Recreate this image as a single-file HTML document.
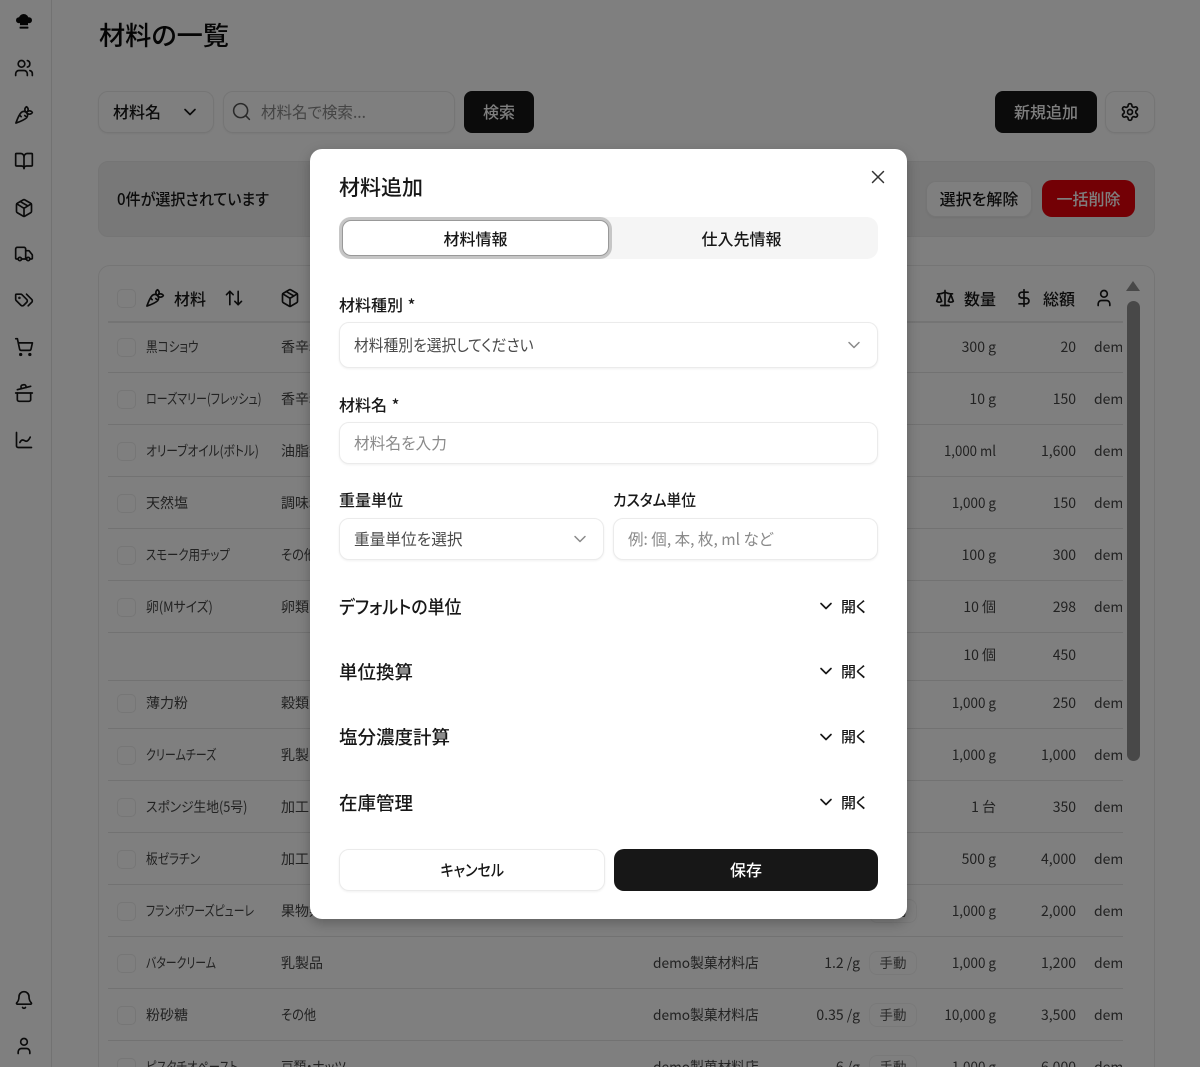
<!DOCTYPE html>
<html lang="ja"><head><meta charset="utf-8"><title>材料の一覧</title>
<style>
*{box-sizing:border-box}
html,body{margin:0;padding:0;width:1200px;height:1067px;overflow:hidden;background:#fff}
body{position:relative;font-family:"Noto Sans CJK JP",sans-serif;font-feature-settings:"palt";color:#171717}
.a{position:absolute;white-space:nowrap}
.k{transform:scaleX(var(--k,1));transform-origin:0 50%}
.i{position:absolute;fill:none;stroke:currentColor;stroke-width:2;stroke-linecap:round;stroke-linejoin:round}
.box{position:absolute;border:1px solid #ebebeb;border-radius:8px;background:#fff}
.t{position:absolute;font-size:14px;line-height:20px;white-space:nowrap;color:#444;transform:scaleX(var(--k,1));transform-origin:0 50%}
.r{text-align:right;transform-origin:100% 50%}
.cb{position:absolute;left:117px;width:19px;height:19px;border:1px solid #ececec;border-radius:5px;background:#fff}
.ln{position:absolute;left:108px;width:1015px;height:1px;background:#e5e5e5}
.bd{position:absolute;left:869px;width:48px;height:24px;border:1px solid #f2f2f2;border-radius:8px;font-size:13.5px;line-height:20px;text-align:center;color:#555}
.h{font-size:16px;font-weight:500;line-height:22px;color:#171717}
#ov{position:absolute;left:0;top:0;width:1200px;height:1067px;background:rgba(0,0,0,.5)}
#m{position:absolute;left:310px;top:149px;width:597px;height:770px;background:#fff;border-radius:12px;box-shadow:0 4px 12px rgba(0,0,0,.25)}
#m .a,#m .box,#m .i{margin-left:-310px;margin-top:-149px}
.lb{font-size:16px;font-weight:500;line-height:22px;color:#171717}
.s{font-size:18.5px;font-weight:500;line-height:26px;color:#171717}
.op{font-size:15px;font-weight:500;line-height:20px;color:#171717}
.f{box-shadow:0 1px 2px rgba(0,0,0,.06);border-radius:10px}
.ph{font-size:16px;line-height:22px;color:#8a8a8a}
.v{font-size:16px;line-height:22px;color:#4a4a4a}
</style></head><body>
<svg width="0" height="0" style="position:absolute"><defs>
<symbol id="users" viewBox="0 0 24 24"><path d="M16 21v-2a4 4 0 0 0-4-4H6a4 4 0 0 0-4 4v2"/><circle cx="9" cy="7" r="4"/><path d="M22 21v-2a4 4 0 0 0-3-3.87"/><path d="M16 3.13a4 4 0 0 1 0 7.75"/></symbol>
<symbol id="carrot" viewBox="0 0 24 24"><path d="M2.27 21.7s9.87-3.5 12.73-6.36a4.5 4.5 0 0 0-6.36-6.37C5.77 11.84 2.27 21.7 2.27 21.7zM8.64 14l-2.05-2.04M15.34 15l-2.46-2.46"/><path d="M22 9s-1.33-2-3.5-2C16.86 7 15 9 15 9s1.33 2 3.5 2S22 9 22 9z"/><path d="M15 2s-2 1.33-2 3.5S15 9 15 9s2-1.84 2-3.5C17 3.33 15 2 15 2z"/></symbol>
<symbol id="book" viewBox="0 0 24 24"><path d="M12 7v14"/><path d="M3 18a1 1 0 0 1-1-1V4a1 1 0 0 1 1-1h5a4 4 0 0 1 4 4 4 4 0 0 1 4-4h5a1 1 0 0 1 1 1v13a1 1 0 0 1-1 1h-6a3 3 0 0 0-3 3 3 3 0 0 0-3-3z"/></symbol>
<symbol id="pkg" viewBox="0 0 24 24"><path d="M11 21.73a2 2 0 0 0 2 0l7-4A2 2 0 0 0 21 16V8a2 2 0 0 0-1-1.73l-7-4a2 2 0 0 0-2 0l-7 4A2 2 0 0 0 3 8v8a2 2 0 0 0 1 1.73z"/><path d="M12 22V12"/><path d="m3.3 7 7.703 4.734a2 2 0 0 0 1.994 0L20.7 7"/><path d="m7.5 4.27 9 5.15"/></symbol>
<symbol id="truck" viewBox="0 0 24 24"><path d="M14 18V6a2 2 0 0 0-2-2H4a2 2 0 0 0-2 2v11a1 1 0 0 0 1 1h2"/><path d="M15 18H9"/><path d="M19 18h2a1 1 0 0 0 1-1v-3.65a1 1 0 0 0-.22-.624l-3.48-4.35A1 1 0 0 0 17.52 8H14"/><circle cx="17" cy="18" r="2"/><circle cx="7" cy="18" r="2"/></symbol>
<symbol id="tags" viewBox="0 0 24 24"><path d="m15 5 6.3 6.3a2.4 2.4 0 0 1 0 3.4L17 19"/><path d="M9.586 5.586A2 2 0 0 0 8.172 5H3a1 1 0 0 0-1 1v5.172a2 2 0 0 0 .586 1.414L8.29 18.29a2.426 2.426 0 0 0 3.42 0l3.58-3.58a2.426 2.426 0 0 0 0-3.42z"/><circle cx="6.5" cy="9.5" r=".5" fill="currentColor"/></symbol>
<symbol id="cart" viewBox="0 0 24 24"><circle cx="8" cy="21" r="1"/><circle cx="19" cy="21" r="1"/><path d="M2.05 2.05h2l2.66 12.42a2 2 0 0 0 2 1.58h9.78a2 2 0 0 0 1.95-1.57l1.65-7.43H5.12"/></symbol>
<symbol id="pot" viewBox="0 0 24 24"><path d="M2 12h20"/><path d="M20 12v8a2 2 0 0 1-2 2H6a2 2 0 0 1-2-2v-8"/><path d="m4 8 16-4"/><path d="m8.86 6.78-.45-1.81a2 2 0 0 1 1.45-2.43l1.94-.48a2 2 0 0 1 2.43 1.46l.45 1.8"/></symbol>
<symbol id="chart" viewBox="0 0 24 24"><path d="M3 3v16a2 2 0 0 0 2 2h16"/><path d="M7 15c1-2 2-3 3.5-3 2 0 2.5 1.5 4 1.5 2 0 3.5-2 5-5"/></symbol>
<symbol id="bell" viewBox="0 0 24 24"><path d="M10.268 21a2 2 0 0 0 3.464 0"/><path d="M3.262 15.326A1 1 0 0 0 4 17h16a1 1 0 0 0 .74-1.673C19.41 13.956 18 12.499 18 8A6 6 0 0 0 6 8c0 4.499-1.411 5.956-2.738 7.326"/></symbol>
<symbol id="user" viewBox="0 0 24 24"><path d="M19 21v-2a4 4 0 0 0-4-4H9a4 4 0 0 0-4 4v2"/><circle cx="12" cy="7" r="4"/></symbol>
<symbol id="search" viewBox="0 0 24 24"><circle cx="11" cy="11" r="8"/><path d="m21 21-4.3-4.3"/></symbol>
<symbol id="gear" viewBox="0 0 24 24"><path d="M12.22 2h-.44a2 2 0 0 0-2 2v.18a2 2 0 0 1-1 1.73l-.43.25a2 2 0 0 1-2 0l-.15-.08a2 2 0 0 0-2.73.73l-.22.38a2 2 0 0 0 .73 2.73l.15.1a2 2 0 0 1 1 1.72v.51a2 2 0 0 1-1 1.74l-.15.09a2 2 0 0 0-.73 2.73l.22.38a2 2 0 0 0 2.73.73l.15-.08a2 2 0 0 1 2 0l.43.25a2 2 0 0 1 1 1.73V20a2 2 0 0 0 2 2h.44a2 2 0 0 0 2-2v-.18a2 2 0 0 1 1-1.73l.43-.25a2 2 0 0 1 2 0l.15.08a2 2 0 0 0 2.73-.73l.22-.39a2 2 0 0 0-.73-2.73l-.15-.08a2 2 0 0 1-1-1.74v-.5a2 2 0 0 1 1-1.74l.15-.09a2 2 0 0 0 .73-2.73l-.22-.38a2 2 0 0 0-2.73-.73l-.15.08a2 2 0 0 1-2 0l-.43-.25a2 2 0 0 1-1-1.73V4a2 2 0 0 0-2-2z"/><circle cx="12" cy="12" r="3"/></symbol>
<symbol id="scale" viewBox="0 0 24 24"><path d="m16 16 3-8 3 8c-.87.65-1.92 1-3 1s-2.13-.35-3-1Z"/><path d="m2 16 3-8 3 8c-.87.65-1.92 1-3 1s-2.13-.35-3-1Z"/><path d="M7 21h10"/><path d="M12 3v18"/><path d="M3 7h2c2 0 5-1 7-2 2 1 5 2 7 2h2"/></symbol>
<symbol id="dollar" viewBox="0 0 24 24"><path d="M12 2v20"/><path d="M17 5H9.5a3.5 3.5 0 0 0 0 7h5a3.5 3.5 0 0 1 0 7H6"/></symbol>
<symbol id="sort" viewBox="0 0 24 24"><path d="m21 16-4 4-4-4"/><path d="M17 20V4"/><path d="m3 8 4-4 4 4"/><path d="M7 4v16"/></symbol>
<symbol id="down" viewBox="0 0 24 24"><path d="m6 9 6 6 6-6"/></symbol>
<symbol id="x" viewBox="0 0 24 24"><path d="M18 6 6 18"/><path d="m6 6 12 12"/></symbol>
</defs></svg>

<div style="position:absolute;left:51px;top:0;width:1px;height:1067px;background:#e5e5e5"></div>
<svg style="position:absolute;left:14px;top:12px" width="20" height="20" viewBox="0 0 20 20" fill="#0a0a0a"><circle cx="9.7" cy="7" r="5"/><circle cx="5" cy="8.3" r="3"/><circle cx="15" cy="8.3" r="3"/><rect x="6" y="8" width="8" height="5.2"/><rect x="5.6" y="14.6" width="8.8" height="2" rx=".5"/></svg>
<svg class="i" style="left:14px;top:58px;color:#171717" width="20" height="20"><use href="#users"/></svg>
<svg class="i" style="left:14px;top:105px;color:#171717" width="20" height="20"><use href="#carrot"/></svg>
<svg class="i" style="left:14px;top:151px;color:#171717" width="20" height="20"><use href="#book"/></svg>
<svg class="i" style="left:14px;top:198px;color:#171717" width="20" height="20"><use href="#pkg"/></svg>
<svg class="i" style="left:14px;top:244px;color:#171717" width="20" height="20"><use href="#truck"/></svg>
<svg class="i" style="left:14px;top:290px;color:#171717" width="20" height="20"><use href="#tags"/></svg>
<svg class="i" style="left:14px;top:337px;color:#171717" width="20" height="20"><use href="#cart"/></svg>
<svg class="i" style="left:14px;top:383px;color:#171717" width="20" height="20"><use href="#pot"/></svg>
<svg class="i" style="left:14px;top:430px;color:#171717" width="20" height="20"><use href="#chart"/></svg>
<svg class="i" style="left:14px;top:990px;color:#171717" width="20" height="20"><use href="#bell"/></svg>
<svg class="i" style="left:14px;top:1036px;color:#171717" width="20" height="20"><use href="#user"/></svg>

<div class="a" style="left:99px;top:15px;font-size:26.2px;font-weight:500;line-height:38px;color:#0a0a0a">材料の一覧</div>

<div class="box f" style="left:98px;top:91px;width:116px;height:42px"></div>
<div class="a" style="left:113px;top:100px;font-size:16px;font-weight:500;line-height:22px">材料名</div>
<svg class="i" style="left:180px;top:102px;color:#171717" width="20" height="20"><use href="#down"/></svg>
<div class="box f" style="left:223px;top:91px;width:232px;height:42px"></div>
<svg class="i" style="left:231px;top:101px;color:#555;stroke-width:1.8" width="21" height="21"><use href="#search"/></svg>
<div class="a k" style="left:261px;top:100px;--k:.97;font-size:16px;line-height:22px;color:#8a8a8a">材料名で検索...</div>
<div class="a" style="left:464px;top:91px;width:70px;height:42px;background:#171717;border-radius:8px;color:#fff;text-align:center;font-size:16px;font-weight:500;line-height:40px">検索</div>
<div class="a" style="left:995px;top:91px;width:102px;height:42px;background:#171717;border-radius:8px;color:#fff;text-align:center;font-size:16px;font-weight:500;line-height:40px">新規追加</div>
<div class="box f" style="left:1105px;top:91px;width:50px;height:42px"></div>
<svg class="i" style="left:1120px;top:102px;color:#171717" width="20" height="20"><use href="#gear"/></svg>

<div class="box" style="left:98px;top:161px;width:1057px;height:76px;background:#f0f0f0;border-radius:10px"></div>
<div class="a k" style="left:117px;top:187px;--k:.94;font-size:16px;font-weight:500;line-height:22px">0件が選択されています</div>
<div class="box f" style="left:926px;top:181px;width:106px;height:36px;line-height:32px;text-align:center;font-size:16px;font-weight:500">選択を解除</div>
<div class="a" style="left:1042px;top:180px;width:93px;height:37px;background:#e7000b;border-radius:10px;color:#fff;text-align:center;font-size:16px;font-weight:500;line-height:37px">一括削除</div>

<div class="box" style="left:98px;top:265px;width:1057px;height:840px;border-radius:12px"></div>
<div class="cb" style="top:289px"></div>
<svg class="i" style="left:145px;top:288px;color:#171717" width="20" height="20"><use href="#carrot"/></svg>
<div class="a h" style="left:174px;top:287px">材料</div>
<svg class="i" style="left:224px;top:288px;color:#171717" width="20" height="20"><use href="#sort"/></svg>
<svg class="i" style="left:280px;top:288px;color:#171717" width="20" height="20"><use href="#pkg"/></svg>
<svg class="i" style="left:935px;top:288px;color:#171717" width="20" height="20"><use href="#scale"/></svg>
<div class="a h" style="left:964px;top:287px">数量</div>
<svg class="i" style="left:1014px;top:288px;color:#171717" width="20" height="20"><use href="#dollar"/></svg>
<div class="a h" style="left:1043px;top:287px">総額</div>
<svg class="i" style="left:1094px;top:288px;color:#171717" width="20" height="20"><use href="#user"/></svg>
<div class="ln" style="top:321px;height:2px;background:#e8e8e8"></div>

<!-- rows -->
<div class="cb" style="top:338px"></div><div class="t" style="left:146px;top:337px;--k:.83">黒コショウ</div><div class="t" style="left:281px;top:337px">香辛料</div><div class="t r" style="left:900px;width:96px;top:337px">300 g</div><div class="t r" style="left:1000px;width:76px;top:337px">20</div><div class="t" style="left:1094px;width:28px;overflow:hidden;top:337px">demo</div><div class="ln" style="top:372px"></div>
<div class="cb" style="top:390px"></div><div class="t" style="left:146px;top:389px;--k:.787">ローズマリー(フレッシュ)</div><div class="t" style="left:281px;top:389px">香辛料</div><div class="t r" style="left:900px;width:96px;top:389px">10 g</div><div class="t r" style="left:1000px;width:76px;top:389px">150</div><div class="t" style="left:1094px;width:28px;overflow:hidden;top:389px">demo</div><div class="ln" style="top:424px"></div>
<div class="cb" style="top:442px"></div><div class="t" style="left:146px;top:441px;--k:.837">オリーブオイル(ボトル)</div><div class="t" style="left:281px;top:441px">油脂類</div><div class="t r" style="left:900px;width:96px;top:441px;--k:.945">1,000 ml</div><div class="t r" style="left:1000px;width:76px;top:441px">1,600</div><div class="t" style="left:1094px;width:28px;overflow:hidden;top:441px">demo</div><div class="ln" style="top:476px"></div>
<div class="cb" style="top:494px"></div><div class="t" style="left:146px;top:493px">天然塩</div><div class="t" style="left:281px;top:493px">調味料</div><div class="t r" style="left:900px;width:96px;top:493px;--k:.96">1,000 g</div><div class="t r" style="left:1000px;width:76px;top:493px">150</div><div class="t" style="left:1094px;width:28px;overflow:hidden;top:493px">demo</div><div class="ln" style="top:528px"></div>
<div class="cb" style="top:546px"></div><div class="t" style="left:146px;top:545px;--k:.815">スモーク用チップ</div><div class="t" style="left:281px;top:545px;--k:.875">その他</div><div class="t r" style="left:900px;width:96px;top:545px">100 g</div><div class="t r" style="left:1000px;width:76px;top:545px">300</div><div class="t" style="left:1094px;width:28px;overflow:hidden;top:545px">demo</div><div class="ln" style="top:580px"></div>
<div class="cb" style="top:598px"></div><div class="t" style="left:146px;top:597px;--k:.917">卵(Mサイズ)</div><div class="t" style="left:281px;top:597px">卵類</div><div class="t r" style="left:900px;width:96px;top:597px">10 個</div><div class="t r" style="left:1000px;width:76px;top:597px">298</div><div class="t" style="left:1094px;width:28px;overflow:hidden;top:597px">demo</div><div class="ln" style="top:632px"></div>
<div class="t r" style="left:900px;width:96px;top:645px">10 個</div><div class="t r" style="left:1000px;width:76px;top:645px">450</div><div class="ln" style="top:680px"></div>
<div class="cb" style="top:694px"></div><div class="t" style="left:146px;top:693px">薄力粉</div><div class="t" style="left:281px;top:693px">穀類</div><div class="t r" style="left:900px;width:96px;top:693px;--k:.96">1,000 g</div><div class="t r" style="left:1000px;width:76px;top:693px">250</div><div class="t" style="left:1094px;width:28px;overflow:hidden;top:693px">demo</div><div class="ln" style="top:728px"></div>
<div class="cb" style="top:746px"></div><div class="t" style="left:146px;top:745px;--k:.787">クリームチーズ</div><div class="t" style="left:281px;top:745px">乳製品</div><div class="t r" style="left:900px;width:96px;top:745px;--k:.96">1,000 g</div><div class="t r" style="left:1000px;width:76px;top:745px">1,000</div><div class="t" style="left:1094px;width:28px;overflow:hidden;top:745px">demo</div><div class="ln" style="top:780px"></div>
<div class="cb" style="top:798px"></div><div class="t" style="left:146px;top:797px;--k:.91">スポンジ生地(5号)</div><div class="t" style="left:281px;top:797px">加工品</div><div class="t r" style="left:900px;width:96px;top:797px">1 台</div><div class="t r" style="left:1000px;width:76px;top:797px">350</div><div class="t" style="left:1094px;width:28px;overflow:hidden;top:797px">demo</div><div class="ln" style="top:832px"></div>
<div class="cb" style="top:850px"></div><div class="t" style="left:146px;top:849px;--k:.833">板ゼラチン</div><div class="t" style="left:281px;top:849px">加工品</div><div class="t r" style="left:900px;width:96px;top:849px">500 g</div><div class="t r" style="left:1000px;width:76px;top:849px">4,000</div><div class="t" style="left:1094px;width:28px;overflow:hidden;top:849px">demo</div><div class="ln" style="top:884px"></div>
<div class="cb" style="top:902px"></div><div class="t" style="left:146px;top:901px;--k:.777">フランボワーズピューレ</div><div class="t" style="left:281px;top:901px">果物類</div><div class="bd" style="top:899px">手動</div><div class="t r" style="left:900px;width:96px;top:901px;--k:.96">1,000 g</div><div class="t r" style="left:1000px;width:76px;top:901px">2,000</div><div class="t" style="left:1094px;width:28px;overflow:hidden;top:901px">demo</div><div class="ln" style="top:936px"></div>
<div class="cb" style="top:954px"></div><div class="t" style="left:146px;top:953px;--k:.78">バタークリーム</div><div class="t" style="left:281px;top:953px">乳製品</div><div class="t" style="left:653px;top:953px;--k:.98">demo製菓材料店</div><div class="t r" style="left:780px;width:80px;top:953px">1.2 /g</div><div class="bd" style="top:951px">手動</div><div class="t r" style="left:900px;width:96px;top:953px;--k:.96">1,000 g</div><div class="t r" style="left:1000px;width:76px;top:953px">1,200</div><div class="t" style="left:1094px;width:28px;overflow:hidden;top:953px">demo</div><div class="ln" style="top:988px"></div>
<div class="cb" style="top:1006px"></div><div class="t" style="left:146px;top:1005px">粉砂糖</div><div class="t" style="left:281px;top:1005px;--k:.875">その他</div><div class="t" style="left:653px;top:1005px;--k:.98">demo製菓材料店</div><div class="t r" style="left:780px;width:80px;top:1005px">0.35 /g</div><div class="bd" style="top:1003px">手動</div><div class="t r" style="left:900px;width:96px;top:1005px;--k:.96">10,000 g</div><div class="t r" style="left:1000px;width:76px;top:1005px">3,500</div><div class="t" style="left:1094px;width:28px;overflow:hidden;top:1005px">demo</div><div class="ln" style="top:1040px"></div>
<div class="cb" style="top:1058px"></div><div class="t" style="left:146px;top:1057px;--k:.807">ピスタチオペースト</div><div class="t" style="left:281px;top:1057px;--k:.9">豆類・ナッツ</div><div class="t" style="left:653px;top:1057px;--k:.98">demo製菓材料店</div><div class="t r" style="left:780px;width:80px;top:1057px">6 /g</div><div class="bd" style="top:1055px">手動</div><div class="t r" style="left:900px;width:96px;top:1057px;--k:.96">1,000 g</div><div class="t r" style="left:1000px;width:76px;top:1057px">6,000</div><div class="t" style="left:1094px;width:28px;overflow:hidden;top:1057px">demo</div>

<!-- scrollbar -->
<svg style="position:absolute;left:1126px;top:281px" width="14" height="10"><path d="M7 0 L14 10 H0 Z" fill="#909090"/></svg>
<div style="position:absolute;left:1127px;top:301px;width:13px;height:460px;border-radius:7px;background:#919191"></div>

<div id="ov"></div>

<div id="m">
<div class="a" style="left:339px;top:172px;font-size:21px;font-weight:500;line-height:30px;color:#171717">材料追加</div>
<svg class="i" style="left:867px;top:166px;color:#333;stroke-width:1.6" width="22" height="22"><use href="#x"/></svg>

<div class="a" style="left:339px;top:217px;width:539px;height:42px;background:#f5f5f5;border-radius:11px"></div>
<div class="a" style="left:342px;top:220px;width:267px;height:36px;background:#fff;border-radius:9px;border:1px solid #999;box-shadow:0 0 0 3px #c6c6c6;text-align:center;font-size:16px;font-weight:500;line-height:34px;color:#171717">材料情報</div>
<div class="a" style="left:608px;top:220px;width:267px;height:36px;text-align:center;font-size:16px;font-weight:500;line-height:36px;color:#171717">仕入先情報</div>

<div class="a lb" style="left:339px;top:293px">材料種別 <span style="margin-left:1px">*</span></div>
<div class="box f" style="left:339px;top:322px;width:539px;height:46px"></div>
<div class="a v k" style="left:354px;top:333px;--k:.923">材料種別を選択してください</div>
<svg class="i" style="left:844px;top:335px;color:#8a8a8a;stroke-width:1.8" width="20" height="20"><use href="#down"/></svg>

<div class="a lb" style="left:339px;top:393px">材料名 <span style="margin-left:1px">*</span></div>
<div class="box f" style="left:339px;top:422px;width:539px;height:42px"></div>
<div class="a ph k" style="left:354px;top:431px;--k:.98">材料名を入力</div>

<div class="a lb" style="left:339px;top:488px">重量単位</div>
<div class="a lb k" style="left:613px;top:488px;--k:.92">カスタム単位</div>
<div class="box f" style="left:339px;top:518px;width:265px;height:42px"></div>
<div class="a v k" style="left:354px;top:527px;--k:.98">重量単位を選択</div>
<svg class="i" style="left:570px;top:529px;color:#8a8a8a;stroke-width:1.8" width="20" height="20"><use href="#down"/></svg>
<div class="box f" style="left:613px;top:518px;width:265px;height:42px"></div>
<div class="a ph k" style="left:628px;top:527px;--k:.97">例: 個, 本, 枚, ml など</div>

<div class="a s k" style="left:339px;top:594px;--k:.917">デフォルトの単位</div>
<svg class="i" style="left:816px;top:596px;color:#171717" width="20" height="20"><use href="#down"/></svg>
<div class="a op" style="left:841px;top:597px">開く</div>

<div class="a s" style="left:339px;top:659px">単位換算</div>
<svg class="i" style="left:816px;top:661px;color:#171717" width="20" height="20"><use href="#down"/></svg>
<div class="a op" style="left:841px;top:662px">開く</div>

<div class="a s" style="left:339px;top:724px">塩分濃度計算</div>
<svg class="i" style="left:816px;top:727px;color:#171717" width="20" height="20"><use href="#down"/></svg>
<div class="a op" style="left:841px;top:727px">開く</div>

<div class="a s" style="left:339px;top:790px">在庫管理</div>
<svg class="i" style="left:816px;top:792px;color:#171717" width="20" height="20"><use href="#down"/></svg>
<div class="a op" style="left:841px;top:793px">開く</div>

<div class="box f" style="left:339px;top:849px;width:266px;height:42px;text-align:center;font-size:16px;font-weight:500;line-height:38px;color:#171717"><span style="display:inline-block;transform:scaleX(.877)">キャンセル</span></div>
<div class="a" style="left:614px;top:849px;width:264px;height:42px;background:#171717;border-radius:10px;text-align:center;font-size:16px;font-weight:500;line-height:40px;color:#fff">保存</div>
</div>
</body></html>
